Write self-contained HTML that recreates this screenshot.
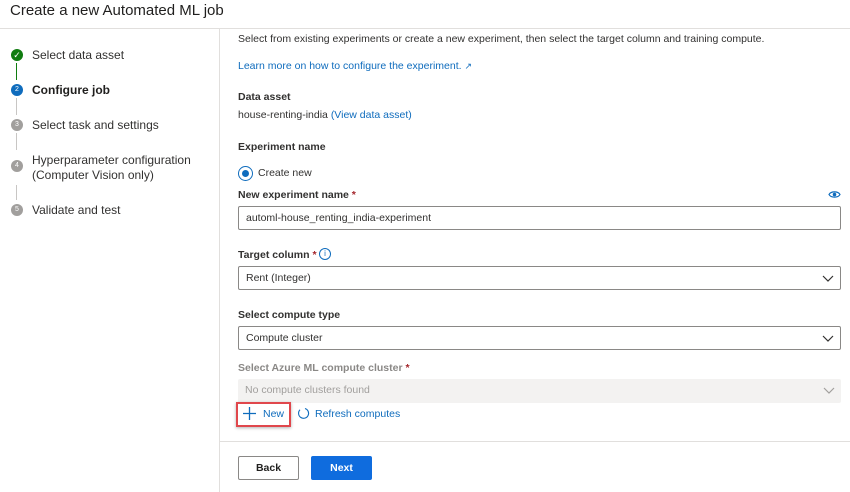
<!DOCTYPE html>
<html><head><style>
*{margin:0;padding:0;box-sizing:border-box}
body{width:850px;height:492px;background:#fff;font-family:"Liberation Sans",sans-serif;color:#323130;position:relative;overflow:hidden;font-size:10.5px}
.a{position:absolute;white-space:nowrap}
.b{font-weight:bold}
.lnk{color:#0f6cbd}
.req{color:#a4262c}
.box{position:absolute;left:238px;width:603px;height:24px;border:1px solid #8a8886;border-radius:2px;padding:0 7px;line-height:22px}
.chev{position:absolute;right:6px;top:5px}
.step{position:absolute;left:11px;width:12px;height:12px;border-radius:50%;background:#a19f9d;color:#fff;font-size:7px;text-align:center;line-height:12px}
.vl{position:absolute;left:16px;width:1px;background:#c8c6c4}
.st{position:absolute;left:32px;font-size:12px;white-space:nowrap}
</style></head><body>
<div class="a" style="left:10px;top:2px;font-size:15px;color:#201f1e">Create a new Automated ML job</div>
<div style="position:absolute;left:0;top:28px;width:850px;height:1px;background:#e1dfdd"></div>
<div style="position:absolute;left:219px;top:29px;width:1px;height:463px;background:#e1dfdd"></div>
<div class="step" style="top:49px;background:#107c10;font-size:9px">✓</div>
<div class="vl" style="top:63px;height:17px;background:#107c10"></div>
<div class="step" style="top:84px;background:#0f6cbd">2</div>
<div class="vl" style="top:98px;height:17px"></div>
<div class="step" style="top:119px">3</div>
<div class="vl" style="top:133px;height:17px"></div>
<div class="step" style="top:160px">4</div>
<div class="vl" style="top:185px;height:15px"></div>
<div class="step" style="top:204px">5</div>
<div class="st" style="top:48px">Select data asset</div>
<div class="st b" style="top:83px;color:#201f1e">Configure job</div>
<div class="st" style="top:118px">Select task and settings</div>
<div class="st" style="top:153px;line-height:15px">Hyperparameter configuration<br>(Computer Vision only)</div>
<div class="st" style="top:203px">Validate and test</div>

<div class="a" style="left:238px;top:33px">Select from existing experiments or create a new experiment, then select the target column and training compute.</div>
<div class="a lnk" style="left:238px;top:60px">Learn more on how to configure the experiment. <span style="font-size:9px">↗</span></div>
<div class="a b" style="left:238px;top:91px">Data asset</div>
<div class="a" style="left:238px;top:109px">house-renting-india <span class="lnk">(View data asset)</span></div>
<div class="a b" style="left:238px;top:141px">Experiment name</div>
<div style="position:absolute;left:238px;top:166px;width:15px;height:15px;border:1px solid #0f6cbd;border-radius:50%"><div style="position:absolute;left:3px;top:3px;width:7px;height:7px;border-radius:50%;background:#0f6cbd"></div></div>
<div class="a" style="left:258px;top:167px">Create new</div>
<div class="a b" style="left:238px;top:189px">New experiment name <span class="req">*</span></div>
<svg class="a" style="left:828px;top:190px" width="13" height="9" viewBox="0 0 13 9"><path d="M1 4.5C3 1 10 1 12 4.5C10 8 3 8 1 4.5Z" fill="none" stroke="#0f6cbd" stroke-width="1.2"/><circle cx="6.5" cy="4.5" r="1.8" fill="#0f6cbd"/></svg>
<div class="box" style="top:206px">automl-house_renting_india-experiment</div>
<div class="a b" style="left:238px;top:249px">Target column <span class="req">*</span></div>
<div style="position:absolute;left:319px;top:248px;width:12px;height:12px;border:1px solid #0f6cbd;border-radius:50%;color:#0f6cbd;font-size:8px;text-align:center;line-height:10px">i</div>
<div class="box" style="top:266px">Rent (Integer)<svg class="chev" width="12" height="12"><path d="M1 4L6 9L11 4" fill="none" stroke="#323130" stroke-width="1.2"/></svg></div>
<div class="a b" style="left:238px;top:309px">Select compute type</div>
<div class="box" style="top:326px">Compute cluster<svg class="chev" width="12" height="12"><path d="M1 4L6 9L11 4" fill="none" stroke="#323130" stroke-width="1.2"/></svg></div>
<div class="a b" style="left:238px;top:362px;color:#8a8886">Select Azure ML compute cluster <span class="req">*</span></div>
<div class="box" style="top:379px;border:none;background:#f3f2f1;color:#a19f9d">No compute clusters found<svg class="chev" width="12" height="12"><path d="M1 4L6 9L11 4" fill="none" stroke="#a19f9d" stroke-width="1.2"/></svg></div>
<div style="position:absolute;left:236px;top:402px;width:55px;height:25px;border:2px solid #e0474c;box-shadow:0 1px 3px rgba(0,0,0,.3)"></div>
<svg class="a" style="left:243px;top:407px" width="13" height="13"><path d="M6.5 0V13M0 6.5H13" stroke="#0f6cbd" stroke-width="1.3"/></svg>
<div class="a lnk" style="left:263px;top:408px">New</div>
<svg class="a" style="left:297px;top:407px" width="13" height="13" viewBox="0 0 13 13"><path d="M8 1.5A5 5 0 1 1 3 2.8" fill="none" stroke="#0f6cbd" stroke-width="1.1"/></svg>
<div class="a lnk" style="left:315px;top:408px">Refresh computes</div>
<div style="position:absolute;left:220px;top:441px;width:630px;height:1px;background:#e1dfdd"></div>
<div style="position:absolute;left:238px;top:456px;width:61px;height:24px;border:1px solid #8a8886;border-radius:2px;text-align:center;line-height:22px;font-weight:bold;color:#201f1e">Back</div>
<div style="position:absolute;left:311px;top:456px;width:61px;height:24px;background:#0f6cde;border-radius:2px;text-align:center;line-height:24px;font-weight:bold;color:#fff">Next</div>
</body></html>
